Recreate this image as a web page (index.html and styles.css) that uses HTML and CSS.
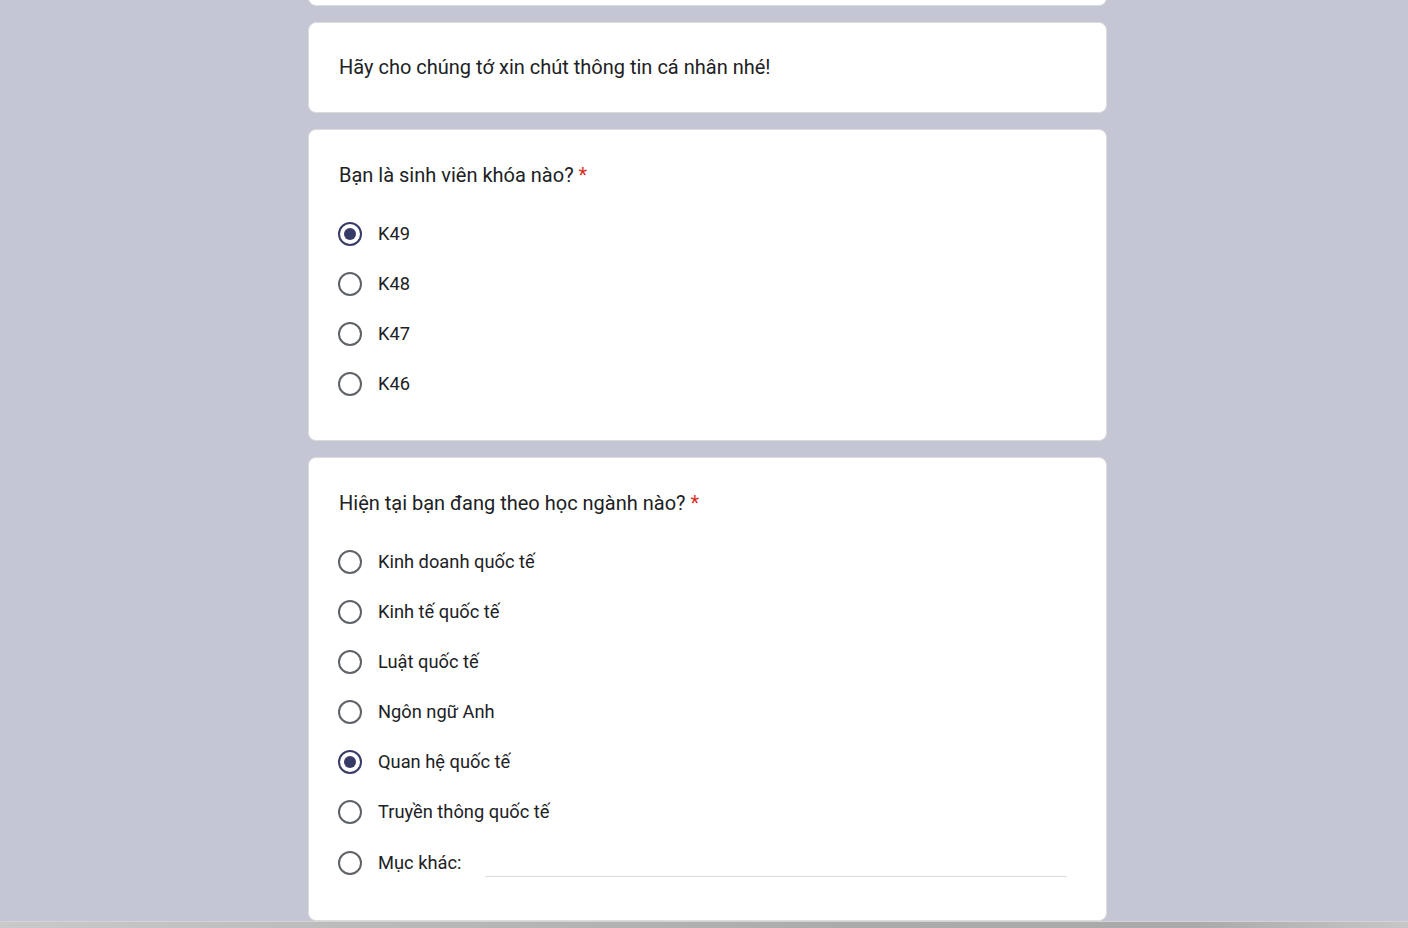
FILE: index.html
```html
<!DOCTYPE html>
<html lang="vi">
<head>
<meta charset="utf-8">
<title>Form</title>
<link rel="stylesheet" href="styles.css">
</head>
<body>
<div class="viewport">
  <div class="column">
    <div class="card card-top"></div>

    <div class="card card-intro">
      <div class="section-title">Hãy cho chúng tớ xin chút thông tin cá nhân nhé!</div>
    </div>

    <div class="card">
      <div class="question">Bạn là sinh viên khóa nào? <span class="req">*</span></div>
      <div class="options">
        <div class="option"><span class="radio checked"></span><span class="label">K49</span></div>
        <div class="option"><span class="radio"></span><span class="label">K48</span></div>
        <div class="option"><span class="radio"></span><span class="label">K47</span></div>
        <div class="option"><span class="radio"></span><span class="label">K46</span></div>
      </div>
    </div>

    <div class="card">
      <div class="question">Hiện tại bạn đang theo học ngành nào? <span class="req">*</span></div>
      <div class="options">
        <div class="option"><span class="radio"></span><span class="label">Kinh doanh quốc tế</span></div>
        <div class="option"><span class="radio"></span><span class="label">Kinh tế quốc tế</span></div>
        <div class="option"><span class="radio"></span><span class="label">Luật quốc tế</span></div>
        <div class="option"><span class="radio"></span><span class="label">Ngôn ngữ Anh</span></div>
        <div class="option"><span class="radio checked"></span><span class="label">Quan hệ quốc tế</span></div>
        <div class="option"><span class="radio"></span><span class="label">Truyền thông quốc tế</span></div>
        <div class="option option-other"><span class="radio"></span><span class="label">Mục khác:</span><span class="other-line"></span></div>
      </div>
    </div>
  </div>
</div>
<div class="bottom-bar"></div>
</body>
</html>
```

FILE: styles.css
```css
html, body {
  margin: 0;
  padding: 0;
}
body {
  width: 1408px;
  height: 928px;
  overflow: hidden;
  background: #c4c6d4;
  font-family: Roboto, "Noto Sans", Arial, sans-serif;
  color: #202124;
  display: flex;
  flex-direction: column;
}
.viewport {
  height: 921px;
  overflow: hidden;
  display: flex;
  justify-content: center;
  padding-left: 7px;
  flex: none;
}
.column {
  width: 799px;
  display: flex;
  flex-direction: column;
  gap: 16px;
}
.card {
  background: #fff;
  border: 1px solid #dadce0;
  border-radius: 8px;
  padding: 30px 30px 31px 30px;
  box-sizing: border-box;
  flex: none;
}
.card-top {
  height: 60px;
  margin-top: -54px;
  padding: 0;
}
.card-intro {
  padding-bottom: 30px;
}
.section-title {
  font-size: 20px;
  line-height: 29px;
}
.question {
  font-size: 20px;
  line-height: 30px;
}
.req {
  color: #d93025;
}
.options {
  margin-top: 19px;
  display: flex;
  flex-direction: column;
}
.option {
  height: 50px;
  display: flex;
  align-items: center;
  font-size: 18.3px;
}
.option-other {
  height: 52px;
}
.radio {
  width: 24px;
  height: 24px;
  box-sizing: border-box;
  border: 2px solid #5f6368;
  border-radius: 50%;
  margin-left: -1px;
  margin-right: 16px;
  flex: none;
  display: flex;
  align-items: center;
  justify-content: center;
}
.radio.checked {
  border-color: #373b68;
}
.radio.checked::after {
  content: "";
  width: 12px;
  height: 12px;
  border-radius: 50%;
  background: #373b68;
}
.label {
  line-height: 24px;
}
.other-line {
  flex: 1;
  align-self: flex-end;
  margin: 0 9px 12px 24px;
  border-bottom: 1px solid #dadce0;
}
.bottom-bar {
  height: 7px;
  flex: none;
  background: linear-gradient(to right, #c9c9c9 0%, #b8b8b8 30%, #ababab 60%, #aaaaaa 85%, #c6c6c6 100%);
  border-top: 1px solid #d4d4d4;
  box-sizing: border-box;
}
```
